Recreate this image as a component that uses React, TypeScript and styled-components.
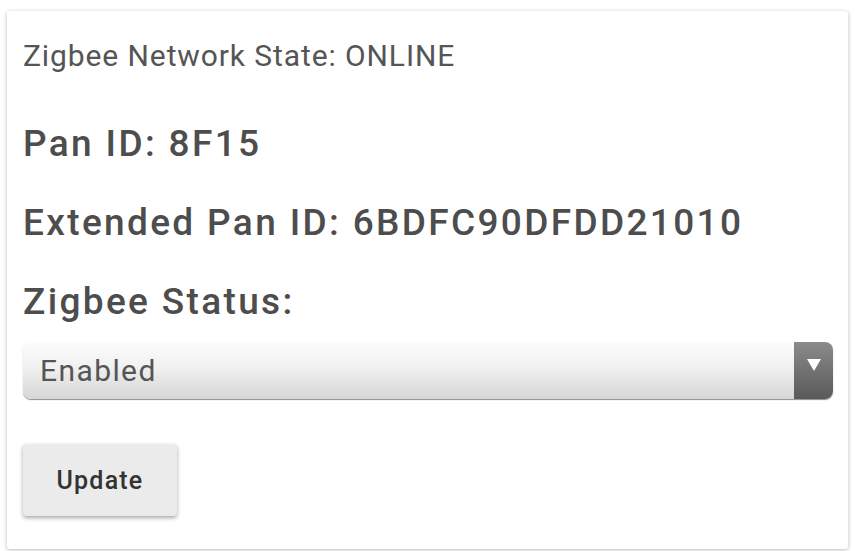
import React from "react";
import styled, { createGlobalStyle } from "styled-components";

const Global = createGlobalStyle`
  html, body { margin: 0; padding: 0; background: #fff; }
  body { font-family: Roboto, "Noto Sans", sans-serif; }
`;

const Page = styled.div`
  padding: 11px 19px 2px 7px;
`;

const Card = styled.div`
  background: #fff;
  border-radius: 3px;
  box-shadow: 0 1px 4px rgba(0, 0, 0, 0.28);
  height: 538px;
  box-sizing: border-box;
  padding: 27px 15px 0 16px;
  display: flex;
  flex-direction: column;
  align-items: flex-start;
`;

const StateLine = styled.div`
  font-size: 30px;
  line-height: 36px;
  color: #555;
  font-weight: 400;
  letter-spacing: 0.9px;
`;

const Heading = styled.div<{ $top: number }>`
  font-size: 37px;
  line-height: 40px;
  font-weight: 500;
  color: #4d4d4d;
  margin-top: ${(p) => p.$top}px;
  letter-spacing: 2.35px;
`;

const SelectWrap = styled.div`
  margin-top: 20px;
  width: 100%;
  height: 57px;
  border-radius: 8px;
  background: linear-gradient(#fcfcfc, #f2f2f2 40%, #d6d6d6);
  box-shadow: 0 1px 1px rgba(0, 0, 0, 0.45);
  display: flex;
  align-items: center;
  overflow: hidden;
`;

const SelectText = styled.div`
  flex: 1;
  padding-left: 17px;
  font-size: 30px;
  color: #555;
  letter-spacing: 1.4px;
`;

const Arrow = styled.div`
  width: 39px;
  align-self: stretch;
  background: linear-gradient(#8b8b8b, #595959);
  display: flex;
  justify-content: center;
  padding-top: 17px;
  box-sizing: border-box;
`;

const Button = styled.button`
  margin-top: 45px;
  width: 154px;
  height: 72px;
  border: none;
  border-radius: 4px;
  background: #ebebeb;
  box-shadow: 0 2px 4px rgba(0, 0, 0, 0.35);
  font-family: Roboto, "Noto Sans", sans-serif;
  font-size: 25px;
  font-weight: 500;
  color: #333;
  letter-spacing: 1.2px;
  padding: 0;
`;

export default function App() {
  return (
    <>
      <Global />
      <Page>
        <Card>
          <StateLine>Zigbee Network State: ONLINE</StateLine>
          <Heading $top={50}>Pan ID: 8F15</Heading>
          <Heading $top={39}>Extended Pan ID: 6BDFC90DFDD21010</Heading>
          <Heading $top={39}>Zigbee Status:</Heading>
          <SelectWrap>
            <SelectText>Enabled</SelectText>
            <Arrow>
              <svg width="14" height="12" viewBox="0 0 14 12">
                <polygon points="0,0 14,0 7,12" fill="#fff" />
              </svg>
            </Arrow>
          </SelectWrap>
          <Button>Update</Button>
        </Card>
      </Page>
    </>
  );
}
